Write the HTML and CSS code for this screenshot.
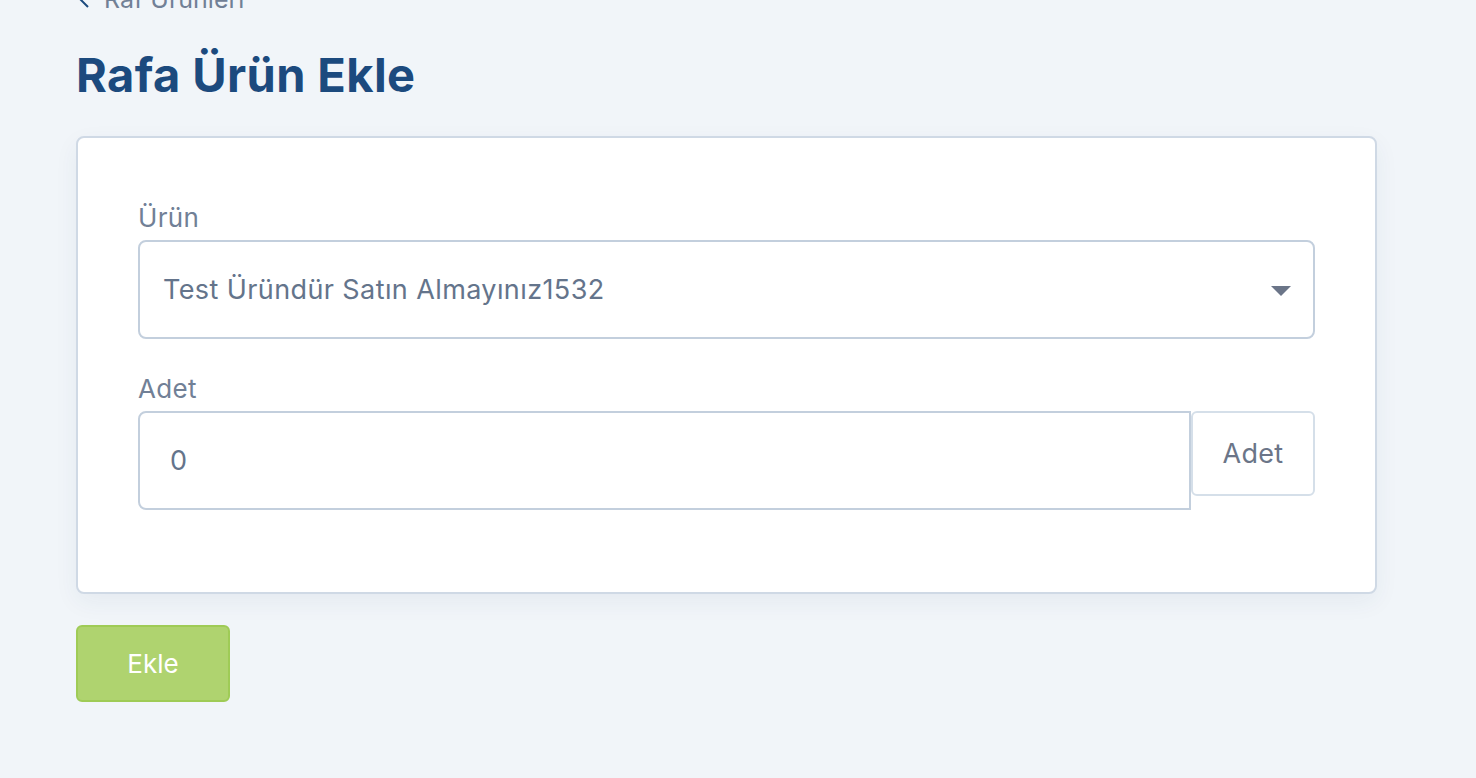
FILE: index.html
```html
<!DOCTYPE html>
<html lang="tr">
<head>
  <meta charset="UTF-8" />
  <meta name="viewport" content="width=device-width, initial-scale=1.0"/>
  <title>Rafa Ürün Ekle</title>
  <link rel="stylesheet" href="styles.css">
</head>
<body>
  <div class="page">
    <a class="back" href="#">
      <svg class="back-icon" width="12" height="20" viewBox="0 0 12 20"><path d="M10 2 L2 10 L10 18" fill="none" stroke="#1c4a7e" stroke-width="2"/></svg>
      Raf Ürünleri
    </a>
    <h1>Rafa Ürün Ekle</h1>
    <form class="card">
      <div class="field">
        <label for="product">Ürün</label>
        <div class="select">
          <span>Test Üründür Satın Almayınız1532</span>
          <span class="caret"></span>
        </div>
      </div>
      <div class="field">
        <label for="qty">Adet</label>
        <div class="input-group">
          <input type="text" id="qty" value="0" />
          <span class="addon">Adet</span>
        </div>
      </div>
    </form>
    <button type="submit" class="btn">Ekle</button>
  </div>
</body>
</html>
```

FILE: styles.css
```css
body {
  margin: 0;
  background: #f1f5f9;
  font-family: Inter, "Noto Sans", sans-serif;
  color: #718096;
}
.page {
  padding: 0 99px 0 76px;
}
.back {
  display: flex;
  align-items: center;
  gap: 14px;
  margin-top: -19px;
  height: 36px;
  color: #718096;
  font-size: 25px;
  text-decoration: none;
}
.back-icon {
  margin-left: 2px;
}
h1 {
  margin: 28px 0 31px;
  font-size: 47px;
  font-weight: 700;
  letter-spacing: 0.4px;
  color: #1c4a7e;
  line-height: 60px;
}
.card {
  background: #fff;
  border: 2px solid #cfd9e5;
  border-radius: 8px;
  box-shadow: 0 8px 24px rgba(30, 60, 100, 0.06);
  padding: 64px 60px 82px;
}
.field + .field {
  margin-top: 34px;
}
label {
  display: block;
  font-size: 26px;
  line-height: 32px;
  letter-spacing: 0.3px;
  margin-bottom: 6px;
  color: #718096;
}
.select {
  display: flex;
  align-items: center;
  justify-content: space-between;
  height: 99px;
  box-sizing: border-box;
  border: 2px solid #c3cfdd;
  border-radius: 8px;
  padding: 0 22px 0 23px;
  font-size: 27px;
  letter-spacing: 0.4px;
  color: #64748b;
}
.caret {
  width: 0;
  height: 0;
  border-left: 10px solid transparent;
  border-right: 10px solid transparent;
  border-top: 10px solid #6b7588;
  margin-top: 2px;
}
.input-group {
  display: flex;
  align-items: flex-start;
}
.input-group input {
  flex: 1;
  height: 99px;
  box-sizing: border-box;
  border: 2px solid #c3cfdd;
  border-radius: 8px 0 0 8px;
  padding: 0 30px;
  font-family: inherit;
  font-size: 27px;
  color: #64748b;
  outline: none;
}
.addon {
  display: flex;
  align-items: center;
  justify-content: center;
  width: 124px;
  height: 85px;
  box-sizing: border-box;
  border: 2px solid #d5dfe9;
  border-radius: 6px;
  font-size: 27px;
  letter-spacing: 0.3px;
  color: #6b7588;
}
.btn {
  margin-top: 31px;
  width: 154px;
  height: 77px;
  background: #afd36f;
  border: 2px solid #9fcb56;
  border-radius: 6px;
  color: #fff;
  font-family: inherit;
  font-size: 26px;
  cursor: pointer;
}
```
